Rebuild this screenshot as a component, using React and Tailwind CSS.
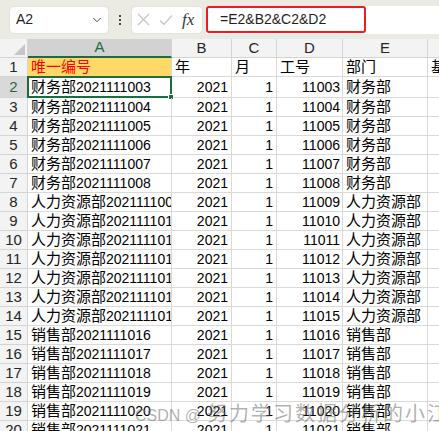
import { ChevronDown } from "lucide-react";

const FONT = "font-['Liberation_Sans','Noto_Sans_CJK_SC',sans-serif]";

// build the sheet rows (row 2 .. 20)
const depts = [
  { name: "财务部", from: 1003, to: 1008 },
  { name: "人力资源部", from: 1009, to: 1015 },
  { name: "销售部", from: 1016, to: 1021 },
];
const rows = [];
depts.forEach((d) => {
  for (let n = d.from; n <= d.to; n++) {
    rows.push({ dept: d.name, code: "202111" + n, id: "1" + n });
  }
});

const cols = [
  { key: "A", w: "w-[144px]" },
  { key: "B", w: "w-[60px]" },
  { key: "C", w: "w-[45px]" },
  { key: "D", w: "w-[66px]" },
  { key: "E", w: "w-[85px]" },
  { key: "F", w: "w-[80px]" },
];

const Cjk = ({ children }) => <span className="text-[15px]">{children}</span>;

const RowHead = ({ n, active, h }) => (
  <div
    className={`w-[28px] shrink-0 ${h} flex items-center justify-center border-r border-b border-[#d4d4d4] text-[15px] ${
      active ? "bg-[#d9d9d9] text-[#1e6b41]" : "bg-[#f3f3f3] text-[#262626]"
    }`}
  >
    {n}
  </div>
);

const Cell = ({ w, h, right, className = "", children }) => (
  <div
    className={`${w} ${h} shrink-0 flex items-center overflow-hidden whitespace-nowrap border-r border-b border-[#d9d9d9] text-[14px] text-black ${
      right ? "justify-end pr-[3px]" : "pl-[3px]"
    } ${className}`}
  >
    {children}
  </div>
);

export default function App() {
  return (
    <div className={`relative w-[439px] h-[431px] overflow-hidden bg-white ${FONT}`}>
      {/* formula toolbar */}
      <div className="h-[39px] bg-[#ebebe4] flex items-center pl-[9px] gap-[0px]">
        <div className="w-[100px] h-[28px] bg-white rounded-[5px] border border-[#e2e2dc] flex items-center justify-between pl-[6px] pr-[4px] text-[14px] text-[#1f1f1f]">
          <span>A2</span>
          <ChevronDown size={14} strokeWidth={1.6} className="text-[#444]" />
        </div>
        <div className="w-[22px] flex flex-col items-center gap-[2px]">
          <span className="w-[2px] h-[2px] bg-[#444]" />
          <span className="w-[2px] h-[2px] bg-[#444]" />
          <span className="w-[2px] h-[2px] bg-[#444]" />
        </div>
        <div className="w-[72px] h-[28px] bg-white rounded-[5px] border border-[#e2e2dc] flex items-center pl-[5px] gap-[9px]">
          <svg width="13" height="13" viewBox="0 0 13 13" className="shrink-0">
            <path d="M1 1 L12 12 M12 1 L1 12" stroke="#c4c4c4" strokeWidth="1.2" />
          </svg>
          <svg width="14" height="12" viewBox="0 0 14 12" className="shrink-0">
            <path d="M1 6.5 L5 10.5 L13 1.5" stroke="#c4c4c4" strokeWidth="1.2" fill="none" />
          </svg>
          <span className="font-['Liberation_Serif',serif] italic text-[17px] text-[#3a3a3a] leading-none">fx</span>
        </div>
        <div className="flex-1 h-[28px] ml-[3px] bg-white flex items-center">
          <div className="w-[160px] h-[27px] border-2 border-[#ee1c1c] rounded-[3px] flex items-center pl-[12px] text-[14px] text-[#1f1f1f]">
            =E2&amp;B2&amp;C2&amp;D2
          </div>
        </div>
      </div>

      {/* column headers */}
      <div className="flex h-[19px]">
        <div className="w-[28px] shrink-0 h-[19px] bg-[#f3f3f3] border-r border-b border-[#d4d4d4] relative">
          <svg width="11" height="11" viewBox="0 0 11 11" className="absolute right-[2px] bottom-[2px]">
            <path d="M11 0 L11 11 L0 11 Z" fill="#c6c6c6" />
          </svg>
        </div>
        {cols.map((c) => (
          <div
            key={c.key}
            className={`${c.w} shrink-0 h-[19px] flex items-center justify-center text-[15px] border-r border-[#d4d4d4] ${
              c.key === "A"
                ? "bg-[#d2d2d2] text-[#1e6b41] border-b-2 border-b-[#1e6b41]"
                : "bg-[#f3f3f3] text-[#262626] border-b border-b-[#d4d4d4]"
            }`}
          >
            {c.key}
          </div>
        ))}
      </div>

      {/* row 1: titles */}
      <div className="flex">
        <RowHead n={1} h="h-[19px]" />
        <Cell w="w-[144px]" h="h-[19px]" className="bg-[#ffd966] text-[#ff0000]">
          <span className="text-[15px] text-[#ff0000]">唯一编号</span>
        </Cell>
        <Cell w="w-[60px]" h="h-[19px]"><Cjk>年</Cjk></Cell>
        <Cell w="w-[45px]" h="h-[19px]"><Cjk>月</Cjk></Cell>
        <Cell w="w-[66px]" h="h-[19px]"><Cjk>工号</Cjk></Cell>
        <Cell w="w-[85px]" h="h-[19px]"><Cjk>部门</Cjk></Cell>
        <Cell w="w-[80px]" h="h-[19px]"><Cjk>基本工资</Cjk></Cell>
      </div>

      {/* data rows */}
      {rows.map((r, i) => {
        const h = i === 0 ? "h-[21px]" : "h-[19px]";
        return (
          <div key={r.id} className="flex">
            <RowHead n={i + 2} active={i === 0} h={h} />
            <div className="relative">
              <Cell w="w-[144px]" h={h}>
                <Cjk>{r.dept}</Cjk>
                {r.code}
              </Cell>
              {i === 0 && (
                <div className="absolute -left-[1px] -top-[1px] w-[145px] h-[22px] border-2 border-[#1e6b41]">
                  <div className="absolute -right-[4px] -bottom-[4px] w-[6px] h-[6px] bg-[#1e6b41] border border-white" />
                </div>
              )}
            </div>
            <Cell w="w-[60px]" h={h} right>2021</Cell>
            <Cell w="w-[45px]" h={h} right>1</Cell>
            <Cell w="w-[66px]" h={h} right className="!pr-[2px]">{r.id}</Cell>
            <Cell w="w-[85px]" h={h}><Cjk>{r.dept}</Cjk></Cell>
            <Cell w="w-[80px]" h={h} />
          </div>
        );
      })}

      {/* watermark */}
      <div className="absolute left-[135px] top-[399px] flex items-baseline text-[rgba(110,110,110,0.55)] pointer-events-none whitespace-nowrap">
        <span className="text-[16px] mr-[6px]">CSDN @</span>
        <span className="text-[20px] tracking-[2px]">努力学习数据分析的小江</span>
      </div>
    </div>
  );
}
